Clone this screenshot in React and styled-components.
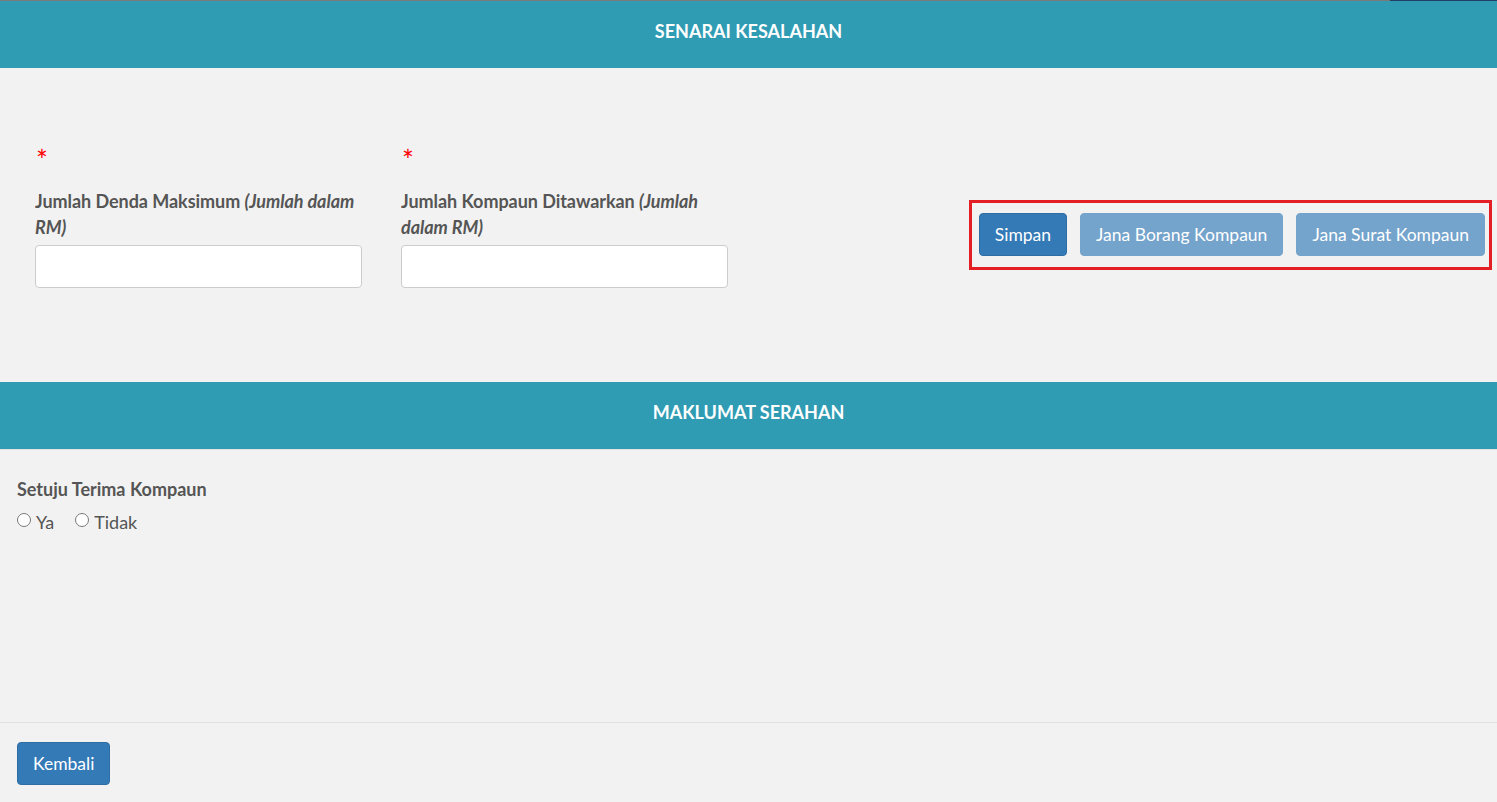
import React from "react";
import styled, { createGlobalStyle } from "styled-components";

const Global = createGlobalStyle`
  html, body {
    margin: 0;
    padding: 0;
    background: #f2f2f2;
    font-family: Lato, "Open Sans", sans-serif;
    color: #555;
  }
  * { box-sizing: border-box; }
`;

const TopLine = styled.div`
  display: flex;
  height: 1px;
  background: #7a7a7a;
  div {
    margin-left: auto;
    width: 107px;
    background: #1f3f66;
  }
`;

const Header = styled.div`
  height: ${(p) => (p.$line ? 68 : 67)}px;
  padding-bottom: 7px;
  background: #2f9cb4;
  display: flex;
  align-items: center;
  justify-content: center;
  color: #fff;
  font-size: 18px;
  font-weight: 700;
  border-bottom: 1px solid ${(p) => (p.$line ? "#e2e2e2" : "#2f9cb4")};
`;

const ErrorBody = styled.section`
  height: 314px;
  display: flex;
  align-items: flex-start;
  padding: 77px 5px 0 35px;
`;

const Field = styled.div`
  width: 327px;
  & + & {
    margin-left: 39px;
  }
`;

const Required = styled.div`
  color: #ff0000;
  font-size: 28px;
  line-height: 30px;
  height: 43px;
  margin-left: 1px;
`;

const Label = styled.label`
  display: block;
  font-size: 18px;
  font-weight: 700;
  line-height: 26px;
  letter-spacing: -0.05px;
  color: #555;
  margin-bottom: 5px;
  em {
    font-weight: 700;
  }
`;

const Input = styled.input`
  display: block;
  width: 100%;
  height: 43px;
  border: 1px solid #ccc;
  border-radius: 4px;
  background: #fff;
  font: inherit;
`;

const ActionBox = styled.div`
  margin: 55px 0 0 auto;
  display: flex;
  gap: 13px;
  padding: 10px 4px 11px 7px;
  border: 3px solid #e31e24;
`;

const Button = styled.button`
  height: 43px;
  padding: 0 15px;
  border: 1px solid ${(p) => (p.disabled ? "#74a3cb" : "#2e6da4")};
  border-radius: 4px;
  background: ${(p) => (p.disabled ? "#74a3cb" : "#337ab7")};
  color: #fff;
  font-family: Lato, "Open Sans", sans-serif;
  font-size: 17.5px;
  cursor: ${(p) => (p.disabled ? "not-allowed" : "pointer")};
`;

const SubmitBody = styled.section`
  height: 272px;
  padding: 29px 17px 0;
`;

const Question = styled.div`
  font-size: 18px;
  font-weight: 700;
  line-height: 20px;
  margin-bottom: 12px;
`;

const Radios = styled.div`
  display: flex;
  gap: 21px;
  font-size: 18px;
  label {
    display: flex;
    align-items: center;
    gap: 5px;
  }
  input {
    margin: 0;
    width: 14px;
    height: 14px;
    position: relative;
    top: -2px;
  }
`;

const Footer = styled.footer`
  border-top: 1px solid #e2e2e2;
  padding: 19px 17px 16px;
`;

export default function App() {
  return (
    <>
      <Global />
      <TopLine>
        <div />
      </TopLine>
      <Header>SENARAI KESALAHAN</Header>
      <ErrorBody>
        <Field>
          <Required>*</Required>
          <Label>
            Jumlah Denda Maksimum <em>(Jumlah dalam RM)</em>
          </Label>
          <Input type="text" />
        </Field>
        <Field>
          <Required>*</Required>
          <Label>
            Jumlah Kompaun Ditawarkan <em>(Jumlah dalam RM)</em>
          </Label>
          <Input type="text" />
        </Field>
        <ActionBox>
          <Button>Simpan</Button>
          <Button disabled>Jana Borang Kompaun</Button>
          <Button disabled>Jana Surat Kompaun</Button>
        </ActionBox>
      </ErrorBody>
      <Header $line>MAKLUMAT SERAHAN</Header>
      <SubmitBody>
        <Question>Setuju Terima Kompaun</Question>
        <Radios>
          <label>
            <input type="radio" name="terima" /> Ya
          </label>
          <label>
            <input type="radio" name="terima" /> Tidak
          </label>
        </Radios>
      </SubmitBody>
      <Footer>
        <Button>Kembali</Button>
      </Footer>
    </>
  );
}
